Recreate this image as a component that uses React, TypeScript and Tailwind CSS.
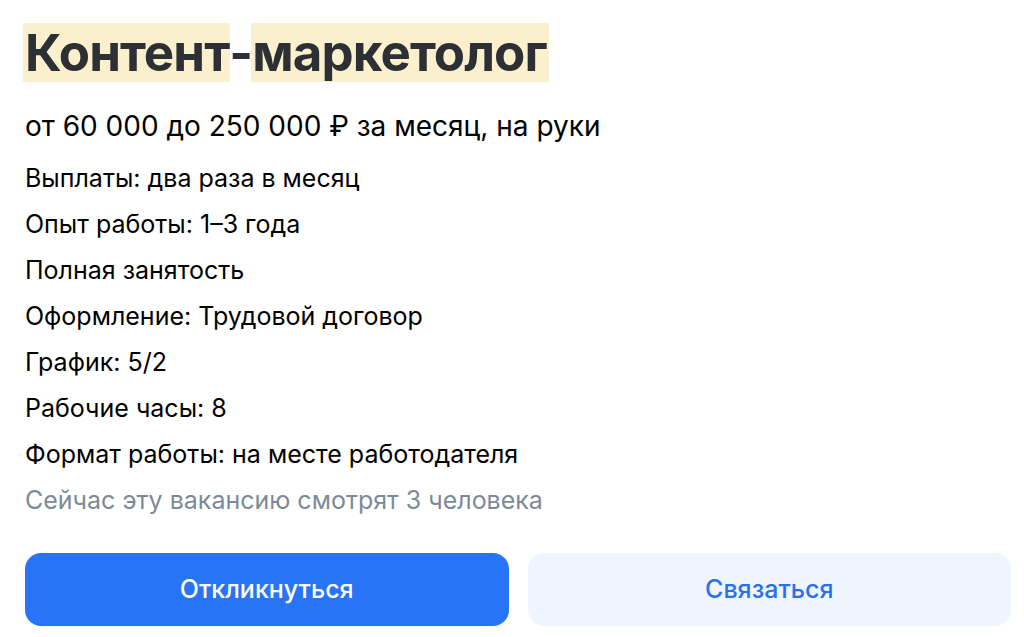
export default function App() {
  const items = [
    "Выплаты: два раза в месяц",
    "Опыт работы: 1–3 года",
    "Полная занятость",
    "Оформление: Трудовой договор",
    "График: 5/2",
    "Рабочие часы: 8",
    "Формат работы: на месте работодателя",
  ];

  return (
    <div className="min-h-[637px] w-[1024px] bg-white pl-[25px] pr-[13px] pt-[23px] font-['Inter','Noto_Sans',sans-serif] text-black">
      <h1 className="-ml-[2px] flex items-center text-[51px] font-bold leading-[59px] tracking-[-0.9px] text-[#2c2f33]">
        <span className="inline-block bg-[#faf0cd] pl-[2px] pr-[1px]">Контент</span>
        <span className="-mx-[1px] inline-block">-</span>
        <span className="inline-block bg-[#faf0cd] pl-[1px] pr-[2px]">маркетолог</span>
      </h1>
      <p className="mt-[27px] text-[28px] leading-[34px]">
        от 60 000 до 250 000 ₽ за месяц, на руки
      </p>
      <div className="mt-[20px] flex flex-col gap-[16px]">
        {items.map((it) => (
          <p key={it} className="text-[25px] leading-[30px]">
            {it}
          </p>
        ))}
        <p className="text-[25px] leading-[30px] text-[#7c8a98]">
          Сейчас эту вакансию смотрят 3 человека
        </p>
      </div>
      <div className="mt-[38px] flex gap-[19px]">
        <button className="h-[73px] flex-1 rounded-[16px] bg-[#2874f6] text-[25px] font-medium text-white">
          Откликнуться
        </button>
        <button className="h-[73px] flex-1 rounded-[16px] bg-[#eef5fe] text-[25px] font-medium text-[#2a6ff0]">
          Связаться
        </button>
      </div>
    </div>
  );
}
